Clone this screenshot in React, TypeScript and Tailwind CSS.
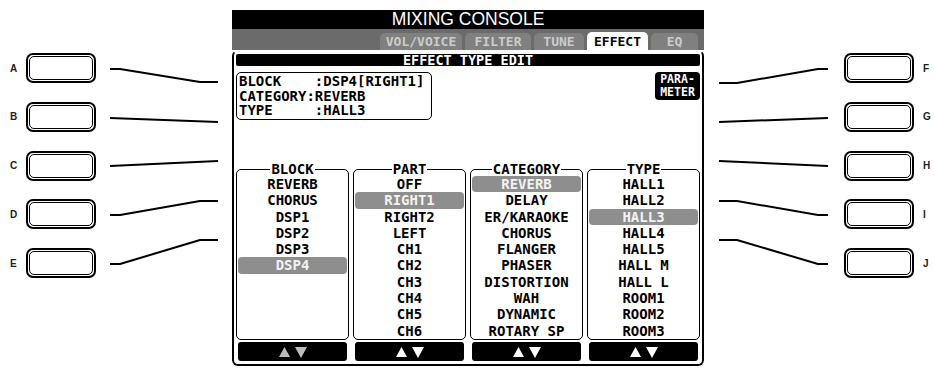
import React from "react";

const blockItems = ["REVERB", "CHORUS", "DSP1", "DSP2", "DSP3", "DSP4", "", "", "", ""];
const partItems = ["OFF", "RIGHT1", "RIGHT2", "LEFT", "CH1", "CH2", "CH3", "CH4", "CH5", "CH6"];
const catItems = ["REVERB", "DELAY", "ER/KARAOKE", "CHORUS", "FLANGER", "PHASER", "DISTORTION", "WAH", "DYNAMIC", "ROTARY SP"];
const typeItems = ["HALL1", "HALL2", "HALL3", "HALL4", "HALL5", "HALL M", "HALL L", "ROOM1", "ROOM2", "ROOM3"];

function SideButton() {
  return (
    <div className="w-[70px] h-[30px] rounded-[7px] border-2 border-black p-px bg-white">
      <div className="w-full h-full rounded-[5px] border border-black" />
    </div>
  );
}

function Arrows({ dim }: { dim?: boolean }) {
  const c = dim ? "#bdbdbd" : "#ffffff";
  return (
    <svg width="28" height="12" viewBox="0 0 28 12">
      <polygon points="0,11 5.5,1 11,11" fill={c} />
      <polygon points="16,1 28,1 22,12" fill={c} />
    </svg>
  );
}

function Column({ title, items, selected, dim }: { title: string; items: string[]; selected: number; dim?: boolean }) {
  return (
    <div className="flex flex-col">
      <fieldset className="border-[1.5px] border-black rounded-[5px] px-px m-0 min-w-0">
        <legend className="mx-auto px-px text-[14px] leading-[14px] font-bold text-black">{title}</legend>
        {items.map((it, i) => (
          <div
            key={i}
            className={
              i === selected
                ? "h-[16.3px] leading-[16.3px] text-center text-[14px] font-bold rounded-[4px] bg-[#8e8e8e] text-[#f2f2f2] whitespace-pre"
                : "h-[16.3px] leading-[16.3px] text-center text-[14px] font-bold text-black whitespace-pre"
            }
          >
            {it}
          </div>
        ))}
      </fieldset>
      <div className="mt-[2.5px] mx-[2px] h-[19px] bg-black rounded-[3px] flex items-center justify-center">
        <Arrows dim={dim} />
      </div>
    </div>
  );
}

function Tab({ label, w, active }: { label: string; w: string; active?: boolean }) {
  return (
    <div
      className={
        active
          ? `${w} h-[18px] rounded-t-[5px] bg-white text-black flex items-center justify-center text-[13px] font-bold leading-none`
          : `${w} h-[17px] rounded-t-[5px] bg-[#808080] text-[#cccccc] flex items-center justify-center text-[13px] font-bold leading-none`
      }
    >
      {label}
    </div>
  );
}

export default function App() {
  const leftLabels = ["A", "B", "C", "D", "E"];
  const rightLabels = ["F", "G", "H", "I", "J"];
  return (
    <div className="w-[934px] h-[368px] bg-white flex overflow-hidden font-['DejaVu_Sans_Mono',monospace]">
      {/* left buttons */}
      <div className="w-[96px] shrink-0 pl-[10px] pt-[53px] flex flex-col gap-[18.75px]">
        {leftLabels.map((l) => (
          <div key={l} className="h-[30px] flex items-center">
            <div className="w-[16px] text-[10px] font-bold text-[#222] font-['Liberation_Sans',Arial,sans-serif]">{l}</div>
            <SideButton />
          </div>
        ))}
      </div>

      {/* left connectors */}
      <svg width="136" height="368" className="shrink-0" fill="none" stroke="#000" strokeWidth="2" strokeLinejoin="round" strokeLinecap="butt">
        <path d="M14 69 L24 69 L104 82 L122 82" />
        <path d="M14 118 L122 122" />
        <path d="M14 166 L122 161" />
        <path d="M14 215 L24 215 L104 201 L122 201" />
        <path d="M14 264 L24 264 L104 240 L122 240" />
      </svg>

      {/* screen */}
      <div className="w-[472px] shrink-0 flex flex-col mt-[10px]">
        <div className="h-[19px] bg-black text-white text-center text-[17.5px] leading-[19px] font-['Liberation_Sans',Arial,sans-serif]">
          MIXING CONSOLE
        </div>
        <div className="h-[21px] bg-[#6b6b6b] flex items-end justify-end pr-[6px] gap-[3px]">
          <Tab label="VOL/VOICE" w="w-[82px]" />
          <Tab label="FILTER" w="w-[66px]" />
          <Tab label="TUNE" w="w-[50px]" />
          <Tab label="EFFECT" w="w-[61px]" active />
          <Tab label="EQ" w="w-[47px]" />
        </div>
        <div className="h-[316px] bg-white border-2 border-black border-t-white rounded-[6px] px-[2px] pt-[2px] flex flex-col">
          <div className="h-[12px] bg-black rounded-[2px] text-white text-center text-[13.5px] leading-[12px] font-bold">
            EFFECT TYPE EDIT
          </div>
          <div className="mt-[6px] flex justify-between">
            <div className="w-[196px] h-[48px] border-[1.5px] border-black rounded-[5px] px-[2px] pt-[1px] text-[14px] leading-[14.5px] font-bold text-black whitespace-pre">
              <div>{"BLOCK    :DSP4[RIGHT1]"}</div>
              <div>{"CATEGORY:REVERB"}</div>
              <div>{"TYPE     :HALL3"}</div>
            </div>
            <div className="w-[45px] h-[28px] bg-black rounded-[4px] text-white text-[11.5px] leading-[13.5px] font-bold flex flex-col items-center justify-center">
              <div>PARA-</div>
              <div>METER</div>
            </div>
          </div>
          <div className="mt-[42px] grid grid-cols-4 gap-[4px]">
            <Column title="BLOCK" items={blockItems} selected={5} dim />
            <Column title="PART" items={partItems} selected={1} />
            <Column title="CATEGORY" items={catItems} selected={0} />
            <Column title="TYPE" items={typeItems} selected={2} />
          </div>
        </div>
      </div>

      {/* right connectors */}
      <svg width="140" height="368" className="shrink-0" fill="none" stroke="#000" strokeWidth="2" strokeLinejoin="round">
        <path d="M15 83 L33 83 L114 69 L124 69" />
        <path d="M15 122 L124 118" />
        <path d="M15 161 L124 166" />
        <path d="M15 201 L33 201 L114 215 L124 215" />
        <path d="M15 240 L33 240 L114 264 L124 264" />
      </svg>

      {/* right buttons */}
      <div className="shrink-0 pt-[53px] flex flex-col gap-[18.75px]">
        {rightLabels.map((l) => (
          <div key={l} className="h-[30px] flex items-center">
            <SideButton />
            <div className="ml-[9px] text-[10px] font-bold text-[#222] font-['Liberation_Sans',Arial,sans-serif]">{l}</div>
          </div>
        ))}
      </div>
    </div>
  );
}
